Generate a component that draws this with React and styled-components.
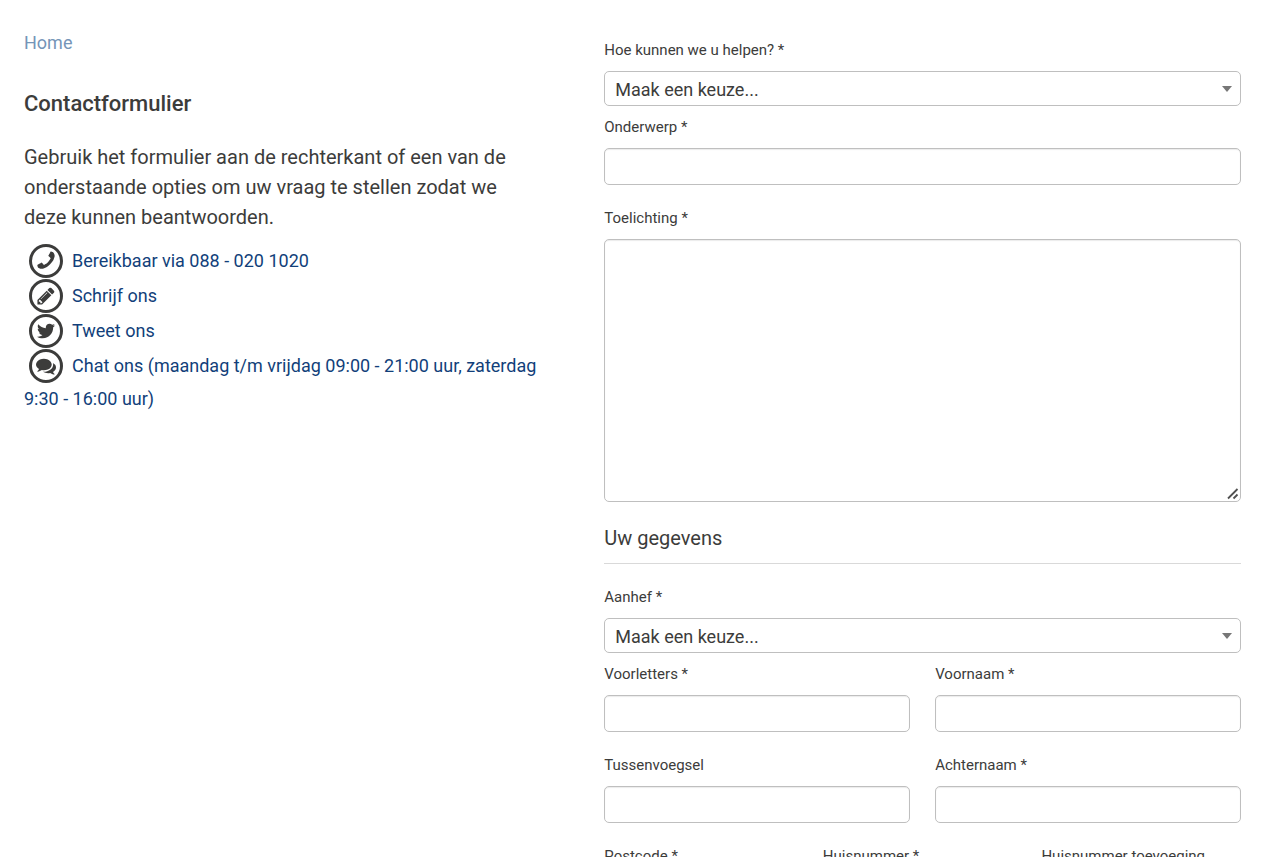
import * as React from 'react';
import styled, { createGlobalStyle, ThemeProvider } from 'styled-components';
import { FaTwitter } from 'react-icons/fa';


const BREAKPOINTS = {
  tablet: '768px',
}

const theme = {
  colors: {
    background: '#fff',
    text: '#3c3c3b',
    link: '#123f7a',
    linkMuted: '#7595b8',
    border: '#bfbfbf',
    divider: '#d9d9d9',
    arrow: '#777',
  },
  font: 'Roboto, "Liberation Sans", sans-serif',
}

const GlobalStyle = createGlobalStyle`
  *, *::before, *::after {
    box-sizing: border-box;
  }
  body {
    margin: 0;
    background: ${theme.colors.background};
    color: ${theme.colors.text};
    font-family: ${theme.font};
    font-size: 18px;
  }
  input, select, textarea {
    font: inherit;
    color: inherit;
  }
`

const PageWrapper = styled.main`
  display: grid;
  grid-template-columns: 21fr 26fr;
  gap: 66px;
  padding: 27px 42px 27px 24px;
  @media (max-width: ${BREAKPOINTS.tablet}){
    grid-template-columns: 1fr;
    gap: 32px;
  }
`

const Breadcrumb = styled.nav`
  line-height: 32px;
  & > a {
    color: ${(props) => props.theme.colors.linkMuted};
    text-decoration: none;
  }
`

const PageTitle = styled.h1`
  margin: 29px 0 22px;
  font-size: 22px;
  font-weight: 500;
  line-height: 32px;
`

const Intro = styled.p`
  margin: 0 0 11px;
  font-size: 20px;
  line-height: 30px;
`

const ContactList = styled.ul`
  margin: 0;
  padding: 0;
  list-style: none;
  line-height: 32px;
`

const ContactLink = styled.a`
  color: ${(props) => props.theme.colors.link};
  text-decoration: none;
`

const IconCircle = styled.span`
  display: inline-flex;
  align-items: center;
  justify-content: center;
  width: 34px;
  height: 34px;
  margin: 1px 9px 0 5px;
  border: 3px solid ${(props) => props.theme.colors.text};
  border-radius: 50%;
  color: ${(props) => props.theme.colors.text};
  vertical-align: -3px;
`

const Form = styled.form`
  padding-top: 13px;
`

const FieldRow = styled.div`
  display: grid;
  grid-template-columns: repeat(${(props) => props.$columns}, 1fr);
  column-gap: ${(props) => props.$gap};
`

const FieldWrapper = styled.div`
  display: flex;
  flex-flow: column;
  gap: 11px;
  margin-bottom: ${(props) => (props.$tight ? '11px' : '23px')};
`

const Label = styled.label`
  font-size: 15px;
  line-height: 20px;
`

const TextInput = styled.input`
  width: 100%;
  height: 37px;
  padding: 0 10px;
  border: 1px solid ${(props) => props.theme.colors.border};
  border-radius: 5px;
  background: none;
  box-shadow: inset 0 1px 1px rgba(0, 0, 0, .08);
`

const TextArea = styled.textarea`
  display: block;
  width: 100%;
  height: 263px;
  padding: 10px;
  border: 1px solid ${(props) => props.theme.colors.border};
  border-radius: 5px;
  background: none;
  box-shadow: inset 0 1px 1px rgba(0, 0, 0, .08);
  resize: vertical;

  &::-webkit-resizer {
    background: url("data:image/svg+xml,%3Csvg xmlns='http://www.w3.org/2000/svg' width='15' height='15'%3E%3Cpath d='M3 12.5L12.5 3M8.5 12.5l4-4' stroke='%23505050' stroke-width='1.8' fill='none'/%3E%3C/svg%3E") no-repeat;
  }
`

const SelectWrapper = styled.div`
  position: relative;
  &::after {
    content: "";
    position: absolute;
    top: 15px;
    right: 9px;
    border: 5px solid transparent;
    border-top: 6px solid ${(props) => props.theme.colors.arrow};
    border-bottom: 0;
    pointer-events: none;
  }
`

const Select = styled.select`
  display: block;
  width: 100%;
  height: 35px;
  padding: 1px 24px 0 10px;
  border: 1px solid ${(props) => props.theme.colors.border};
  border-radius: 5px;
  background: none;
  appearance: none;
`

const SectionTitle = styled.h2`
  margin: 0 0 23px;
  padding-bottom: 12px;
  border-bottom: 1px solid ${(props) => props.theme.colors.divider};
  font-size: 20px;
  font-weight: 400;
  line-height: 26px;
`

const PhoneIcon = ({ size }) => (
  <svg width={size} height={size} viewBox='0 0 1792 1792' fill='currentColor' aria-hidden='true'>
    <path transform='translate(1792 0) scale(-1 1)' d='M1600 1240q0 27-10 70.5t-21 68.5q-21 50-122 106-94 51-186 51-27 0-53-3.5t-57.5-12.5-47-14.5-55.5-20.5-49-18q-98-35-175-83-127-79-264-216t-216-264q-48-77-83-175-3-9-18-49t-20.5-55.5-14.5-47-12.5-57.5-3.5-53q0-92 51-186 56-101 106-122 25-11 68.5-21t70.5-10q14 0 21 3 18 6 53 76 11 19 30 54t35 63.5 31 53.5q3 4 17.5 25t21.5 35.5 7 28.5q0 20-28.5 50t-62 55-62 53-28.5 46q0 9 5 22.5t8.5 20.5 14 24 11.5 19q76 137 174 235t235 174q2 1 19 11.5t24 14 20.5 8.5 22.5 5q18 0 46-28.5t53-62 55-62 50-28.5q14 0 28.5 7t35.5 21.5 25 17.5q25 15 53.5 31t63.5 35 54 30q70 35 76 53 3 7 3 21z' />
  </svg>
)

const PencilIcon = ({ size }) => (
  <svg width={size} height={size} viewBox='0 0 1792 1792' fill='currentColor' aria-hidden='true'>
    <path d='M491 1536l91-91-235-235-91 91v107h128v128h107zm523-928q0-22-22-22-10 0-17 7l-542 542q-7 7-7 17 0 22 22 22 10 0 17-7l542-542q7-7 7-17zm-54-192l416 416-832 832h-416v-416zm683 96q0 53-37 90l-166 166-416-416 166-165q36-38 90-38 53 0 91 38l235 234q37 39 37 91z' />
  </svg>
)

const CommentsIcon = ({ size }) => (
  <svg width={size} height={size} viewBox='0 0 1792 1792' fill='currentColor' aria-hidden='true'>
    <path d='M1408 768q0 139-94 257t-256.5 186.5-353.5 68.5q-86 0-176-16-124 88-278 128-36 9-86 16h-3q-11 0-20.5-8t-11.5-21q-1-3-1-6.5t.5-6.5 2-6l2.5-5 3.5-5.5 4-5 4.5-5 4-4.5q5-6 23-25t26-29.5 22.5-29 25-38.5 20.5-44q-124-72-195-177t-71-224q0-139 94-257t256.5-186.5 353.5-68.5 353.5 68.5 256.5 186.5 94 257zm384 256q0 120-71 224.5t-195 176.5q10 24 20.5 44t25 38.5 22.5 29 26 29.5 23 25q1 1 4 4.5t4.5 5 4 5 3.5 5.5l2.5 5 2 6 .5 6.5-1 6.5q-3 14-13 22t-22 7q-50-7-86-16-154-40-278-128-90 16-176 16-271 0-472-132 58 4 88 4 161 0 309-45t264-129q125-92 192-212t67-254q0-77-23-152 129 71 204 178t75 230z' />
  </svg>
)

const contactOptions = [
  { id: 'phone', href: 'tel:0880201020', icon: PhoneIcon, size: 22, label: 'Bereikbaar via 088 - 020 1020' },
  { id: 'write', href: '#schrijf', icon: PencilIcon, size: 20, label: 'Schrijf ons' },
  { id: 'tweet', href: '#tweet', icon: FaTwitter, size: 18, label: 'Tweet ons' },
  { id: 'chat', href: '#chat', icon: CommentsIcon, size: 20, label: 'Chat ons (maandag t/m vrijdag 09:00 - 21:00 uur, zaterdag 9:30 - 16:00 uur)' },
]

const nameFields = [
  { id: 'voorletters', label: 'Voorletters *' },
  { id: 'voornaam', label: 'Voornaam *' },
  { id: 'tussenvoegsel', label: 'Tussenvoegsel' },
  { id: 'achternaam', label: 'Achternaam *' },
]

const addressFields = [
  { id: 'postcode', label: 'Postcode *' },
  { id: 'huisnummer', label: 'Huisnummer *' },
  { id: 'toevoeging', label: 'Huisnummer toevoeging' },
]

// every icon sits in a slot of the same height, so all circles share one baseline
const IconSlot = styled.span`
  display: flex;
  align-items: center;
  justify-content: center;
  width: 22px;
  height: 18px;
  flex: none;
  &::before {
    content: "";
    height: 18px;
  }
`

const TextField = ({ id, label }) => (
  <FieldWrapper>
    <Label htmlFor={id}>{label}</Label>
    <TextInput id={id} name={id} type='text' />
  </FieldWrapper>
)

const SelectField = ({ id, label, options }) => (
  <FieldWrapper $tight>
    <Label htmlFor={id}>{label}</Label>
    <SelectWrapper>
      <Select id={id} name={id} defaultValue=''>
        <option value=''>Maak een keuze...</option>
        {options.map((option) => (
          <option key={option} value={option}>{option}</option>
        ))}
      </Select>
    </SelectWrapper>
  </FieldWrapper>
)

const App = () => {
  return (
    <ThemeProvider theme={theme}>
      <GlobalStyle />
      <PageWrapper>
        <div>
          <Breadcrumb>
            <a href='#home'>Home</a>
          </Breadcrumb>
          <PageTitle>Contactformulier</PageTitle>
          <Intro>
            Gebruik het formulier aan de rechterkant of een van de onderstaande opties om uw vraag te stellen zodat we deze kunnen beantwoorden.
          </Intro>
          <ContactList>
            {contactOptions.map(({ id, href, icon: Icon, size, label }) => (
              <li key={id}>
                <ContactLink href={href}>
                  <IconCircle><IconSlot><Icon size={size} /></IconSlot></IconCircle>
                  {label}
                </ContactLink>
              </li>
            ))}
          </ContactList>
        </div>
        <Form>
          <SelectField id='hulp' label='Hoe kunnen we u helpen? *' options={['Vraag', 'Klacht']} />
          <TextField id='onderwerp' label='Onderwerp *' />
          <FieldWrapper>
            <Label htmlFor='toelichting'>Toelichting *</Label>
            <TextArea id='toelichting' name='toelichting' />
          </FieldWrapper>
          <SectionTitle>Uw gegevens</SectionTitle>
          <SelectField id='aanhef' label='Aanhef *' options={['De heer', 'Mevrouw']} />
          <FieldRow $columns={2} $gap='25px'>
            {nameFields.map((field) => <TextField key={field.id} {...field} />)}
          </FieldRow>
          <FieldRow $columns={3} $gap='19px'>
            {addressFields.map((field) => <TextField key={field.id} {...field} />)}
          </FieldRow>
        </Form>
      </PageWrapper>
    </ThemeProvider>
  )
}

export default App
